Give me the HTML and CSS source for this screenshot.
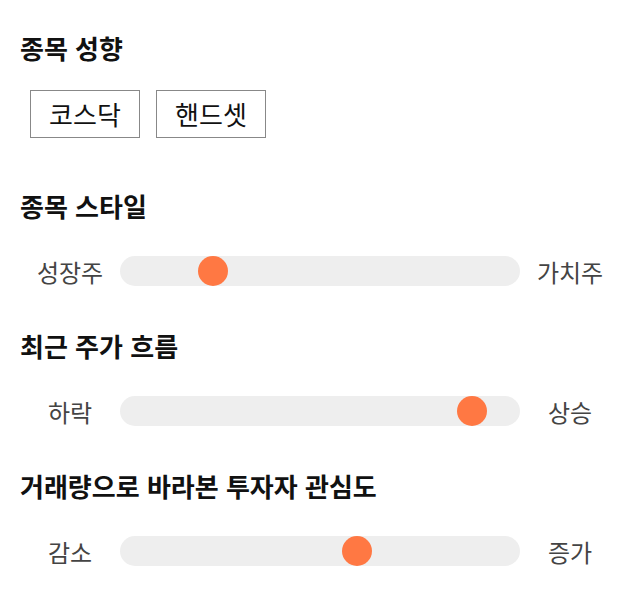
FILE: index.html
```html
<!DOCTYPE html>
<html lang="ko">
<head>
  <meta charset="UTF-8" />
  <meta name="viewport" content="width=device-width, initial-scale=1" />
  <title>종목 성향</title>
  <link rel="stylesheet" href="styles.css">
</head>
<body>
  <main class="prefs">
    <section class="pref pref-first">
      <h2>종목 성향</h2>
      <div class="choices">
        <button type="button" class="choice">코스닥</button>
        <button type="button" class="choice">핸드셋</button>
      </div>
    </section>

    <section class="pref">
      <h2>종목 스타일</h2>
      <div class="scale">
        <span class="scale-label">성장주</span>
        <input type="range" min="0" max="100" value="21" aria-label="종목 스타일">
        <span class="scale-label">가치주</span>
      </div>
    </section>

    <section class="pref">
      <h2>최근 주가 흐름</h2>
      <div class="scale">
        <span class="scale-label">하락</span>
        <input type="range" min="0" max="100" value="91" aria-label="최근 주가 흐름">
        <span class="scale-label">상승</span>
      </div>
    </section>

    <section class="pref">
      <h2>거래량으로 바라본 투자자 관심도</h2>
      <div class="scale">
        <span class="scale-label">감소</span>
        <input type="range" min="0" max="100" value="60" aria-label="투자자 관심도">
        <span class="scale-label">증가</span>
      </div>
    </section>
  </main>
</body>
</html>
```

FILE: styles.css
```css
:root {
  --color-text: #111;
  --color-label: #444;
  --color-track: #eeeeee;
  --color-thumb: #ff7843;
}

body {
  margin: 0;
  font-family: "Noto Sans CJK KR", "Noto Sans", sans-serif;
  background-color: #fff;
  color: var(--color-text);
}

.prefs {
  padding: 0 20px;
}

.pref {
  margin-top: 44px;
}

.pref-first {
  margin-top: 32px;
}

.pref-first + .pref {
  margin-top: 52px;
}

.pref h2 {
  margin: 0 0 34px;
  font-size: 26px;
  font-weight: 700;
  line-height: 32px;
}

.pref-first h2 {
  margin-bottom: 26px;
}

/* Chips */
.choices {
  display: flex;
  gap: 16px;
  padding-left: 10px;
}

.choice {
  width: 110px;
  height: 48px;
  padding: 0;
  background: #fff;
  border: 1px solid #888;
  border-radius: 0;
  font: inherit;
  font-size: 26px;
  line-height: 46px;
  color: var(--color-text);
  cursor: pointer;
}

/* Slider rows */
.scale {
  display: flex;
  align-items: center;
  height: 30px;
}

.scale-label {
  width: 100px;
  text-align: center;
  font-size: 24px;
  color: var(--color-label);
}

.scale input[type="range"] {
  -webkit-appearance: none;
  appearance: none;
  width: 400px;
  height: 30px;
  margin: 0;
  background: var(--color-track);
  border-radius: 15px;
  outline: none;
}

.scale input[type="range"]::-webkit-slider-thumb {
  -webkit-appearance: none;
  appearance: none;
  width: 30px;
  height: 30px;
  border-radius: 50%;
  background: var(--color-thumb);
  border: none;
  cursor: pointer;
}

.scale input[type="range"]::-moz-range-thumb {
  width: 30px;
  height: 30px;
  border-radius: 50%;
  background: var(--color-thumb);
  border: none;
}
```
